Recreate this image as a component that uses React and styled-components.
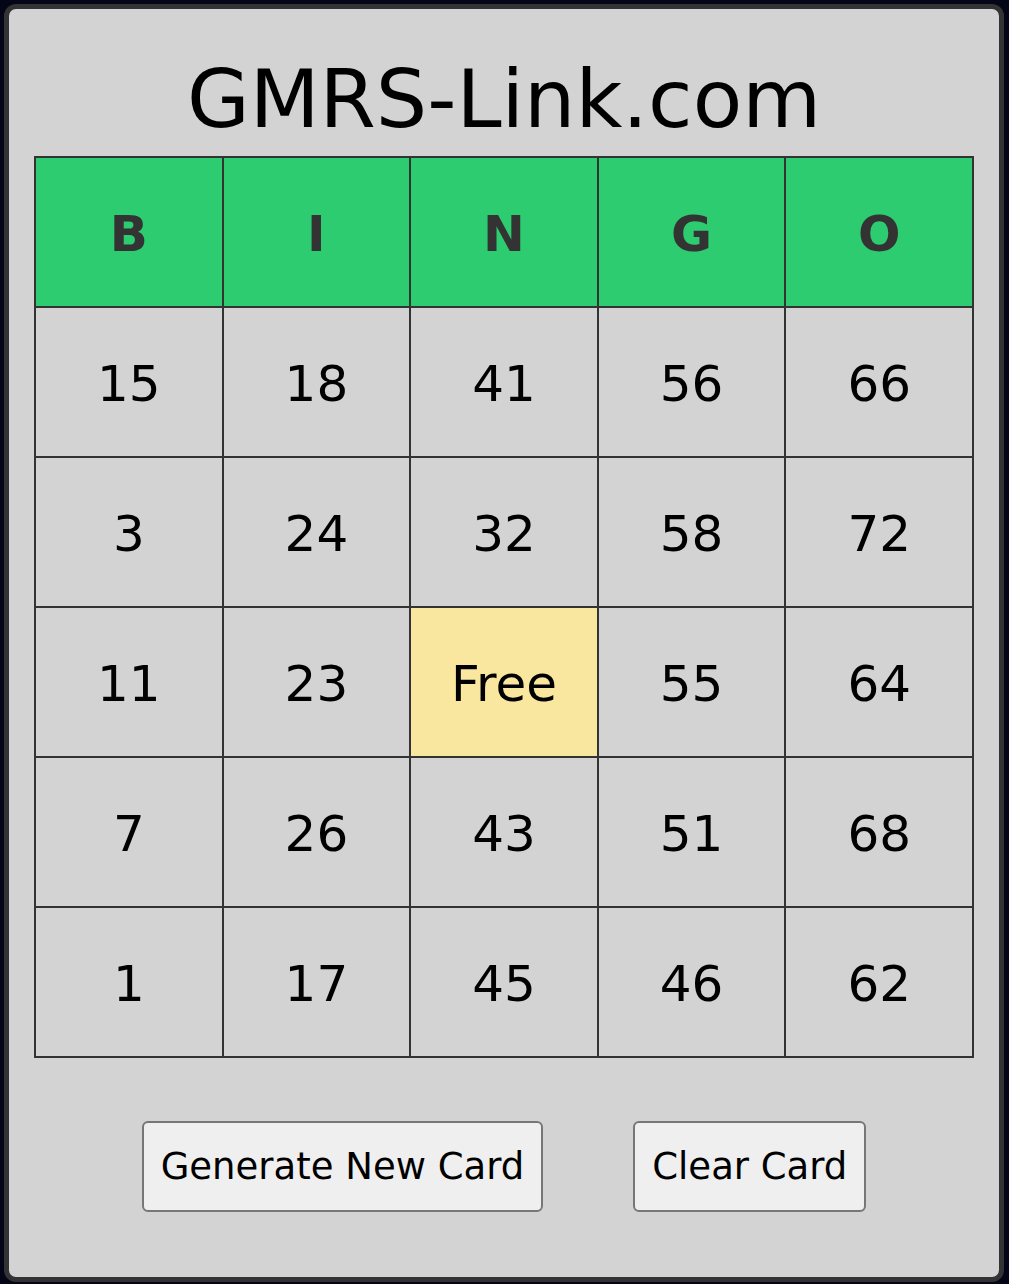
import React from "react";
import styled, { createGlobalStyle } from "styled-components";

const GlobalStyle = createGlobalStyle`
  html, body {
    margin: 0;
    background: #050518;
  }
  body {
    padding: 4px 5px 5px 4px;
    font-family: "DejaVu Sans", Verdana, sans-serif;
  }
`;

const Card = styled.div`
  box-sizing: border-box;
  width: 1000px;
  background: #d3d3d3;
  border: 5px solid #333;
  border-radius: 12px;
  padding: 44px 25px 65px;
`;

const Title = styled.h1`
  margin: 0 0 10px;
  font-size: 81px;
  font-weight: normal;
  line-height: 93px;
  text-align: center;
  color: #000;
`;

const Board = styled.table`
  width: 100%;
  border-collapse: collapse;
  table-layout: fixed;
`;

const HeadCell = styled.th`
  height: 144px;
  border: 2px solid #333;
  background: #2ecc71;
  color: #333;
  font-size: 50px;
  font-weight: bold;
  text-align: center;
  padding: 4px 0 0;
`;

const Cell = styled.td`
  height: 144px;
  border: 2px solid #333;
  background: ${(p) => (p.$free ? "#f9e79f" : "#d3d3d3")};
  color: #000;
  font-size: 50px;
  text-align: center;
  padding: 4px 0 0;
`;

const Actions = styled.div`
  display: flex;
  justify-content: center;
  gap: 90px;
  margin-top: 63px;
`;

const Button = styled.button`
  font-family: "DejaVu Sans", Verdana, sans-serif;
  font-size: 37px;
  line-height: 43px;
  padding: 22px 17px;
  background: #efefef;
  color: #000;
  border: 2px solid #777;
  border-radius: 6px;
  cursor: pointer;
`;

const letters = ["B", "I", "N", "G", "O"];

const rows = [
  [15, 18, 41, 56, 66],
  [3, 24, 32, 58, 72],
  [11, 23, "Free", 55, 64],
  [7, 26, 43, 51, 68],
  [1, 17, 45, 46, 62],
];

export default function App() {
  return (
    <>
      <GlobalStyle />
      <Card>
        <Title>GMRS-Link.com</Title>
        <Board>
          <thead>
            <tr>
              {letters.map((l) => (
                <HeadCell key={l}>{l}</HeadCell>
              ))}
            </tr>
          </thead>
          <tbody>
            {rows.map((row, i) => (
              <tr key={i}>
                {row.map((v, j) => (
                  <Cell key={j} $free={v === "Free"}>
                    {v}
                  </Cell>
                ))}
              </tr>
            ))}
          </tbody>
        </Board>
        <Actions>
          <Button>Generate New Card</Button>
          <Button>Clear Card</Button>
        </Actions>
      </Card>
    </>
  );
}
